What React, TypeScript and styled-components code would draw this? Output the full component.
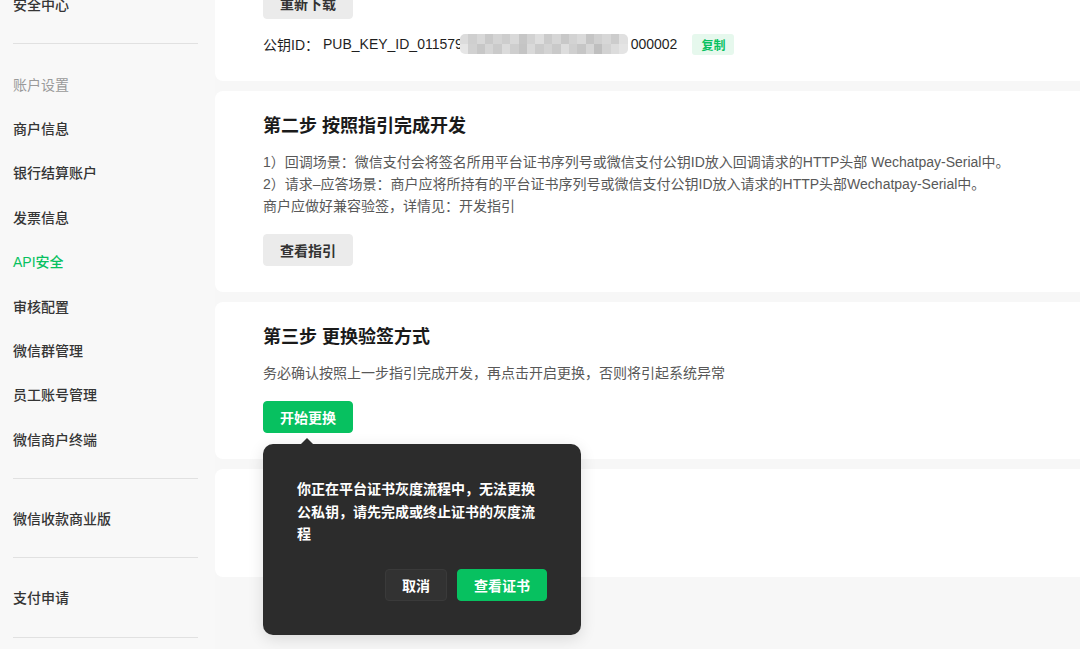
import React from "react";
import styled, { createGlobalStyle } from "styled-components";

const GlobalStyle = createGlobalStyle`
  html, body {
    margin: 0;
    padding: 0;
    background: #f7f7f7;
    font-family: "Liberation Sans", "Noto Sans CJK SC", sans-serif;
    overflow: hidden;
  }
  * { box-sizing: border-box; }
`;

const Page = styled.div`
  display: flex;
  width: 1080px;
  height: 649px;
  overflow: hidden;
`;

const Sidebar = styled.nav`
  width: 215px;
  flex-shrink: 0;
  padding: 0 17px 0 13px;
  margin-top: -18px;
  background: #f8f8f8;
`;

const NavSection = styled.div<{ $first?: boolean }>`
  padding: ${(p) => (p.$first ? "0 0 17px" : "17px 0")};
  border-bottom: 1px solid #e1e1e1;
`;

const NavItem = styled.div<{ $variant?: "heading" | "active" | "normal" }>`
  height: 44.4px;
  display: flex;
  align-items: center;
  font-size: 14px;
  font-weight: ${(p) => (p.$variant === "heading" ? 400 : 500)};
  color: ${(p) =>
    p.$variant === "heading" ? "#9a9a9a" : p.$variant === "active" ? "#07c160" : "#353535"};
`;

const Main = styled.main`
  flex: 1;
  margin-top: -37px;
  margin-right: -24px;
  display: flex;
  flex-direction: column;
  gap: 10.5px;
`;

const Card = styled.section<{ $minHeight?: number }>`
  background: #fff;
  border-radius: 8px;
  padding: 24px 48px 25.5px;
  min-height: ${(p) => (p.$minHeight ? `${p.$minHeight}px` : "auto")};
`;

const Title = styled.h2`
  margin: 0;
  font-size: 18px;
  line-height: 22px;
  font-weight: 700;
  color: #1a1a1a;
`;

const Desc = styled.div`
  margin-top: 14px;
  font-size: 14px;
  line-height: 22px;
  color: #585858;
`;

const Button = styled.button<{ $kind?: "grey" | "primary" | "dark" }>`
  height: 32px;
  padding: 0 16px;
  border-radius: 4px;
  font-family: inherit;
  font-size: 14px;
  font-weight: 700;
  cursor: pointer;
  display: inline-flex;
  align-items: center;
  justify-content: center;
  border: 1px solid
    ${(p) => (p.$kind === "primary" ? "#07c160" : p.$kind === "dark" ? "#3a3a3a" : "#ebebeb")};
  background: ${(p) => (p.$kind === "primary" ? "#07c160" : p.$kind === "dark" ? "#323232" : "#ebebeb")};
  color: ${(p) => (p.$kind === "grey" || !p.$kind ? "#333" : "#fff")};
`;

const ActionRow = styled.div`
  margin-top: 17px;
  display: flex;
`;

const KeyRow = styled.div`
  margin-top: 14px;
  display: flex;
  align-items: center;
  height: 22px;
  font-size: 14px;
  color: #1f1f1f;
`;

const KeyValue = styled.span`
  margin-left: 4px;
  display: inline-flex;
  align-items: center;
`;

const Mosaic = styled.span`
  display: inline-grid;
  grid-template-columns: repeat(20, 8.4px);
  grid-template-rows: repeat(2, 10px);
  border-radius: 5px;
  overflow: hidden;
  margin: 0 3px 0 -3px;
`;

const MosaicCell = styled.span<{ $c: string }>`
  background: ${(p) => p.$c};
`;

const CopyTag = styled.span`
  margin-left: 15px;
  height: 21px;
  padding: 0 9px;
  border-radius: 3px;
  background: #e6f8ed;
  color: #07c160;
  font-size: 12px;
  font-weight: 700;
  display: inline-flex;
  align-items: center;
`;

const PopAnchor = styled.div`
  position: relative;
  display: inline-block;
`;

const Popover = styled.div`
  position: absolute;
  top: calc(100% + 11px);
  left: 0;
  width: 318px;
  padding: 34px;
  background: #2c2c2c;
  border-radius: 10px;
  box-shadow: 0 4px 16px rgba(0, 0, 0, 0.12);
  z-index: 10;

  &::before {
    content: "";
    position: absolute;
    top: -6px;
    left: 38px;
    border-left: 6px solid transparent;
    border-right: 6px solid transparent;
    border-bottom: 6px solid #2c2c2c;
  }
`;

const PopText = styled.p`
  margin: 0;
  font-size: 14px;
  line-height: 22.5px;
  font-weight: 700;
  color: #fff;
`;

const PopActions = styled.div`
  margin-top: 23px;
  display: flex;
  justify-content: flex-end;
  gap: 10px;
`;

const mosaicColors = [
  "#dcdcdc", "#cfcfcf", "#d8d8d8", "#c9c9c9", "#d4d4d4", "#cdcdcd", "#d9d9d9", "#c6c6c6", "#d2d2d2", "#dedede",
  "#cbcbcb", "#d6d6d6", "#c8c8c8", "#d3d3d3", "#dadada", "#c5c5c5", "#d0d0d0", "#d7d7d7", "#cccccc", "#e0e0e0",
  "#e6e6e6", "#d1d1d1", "#c7c7c7", "#d5d5d5", "#cacaca", "#dbdbdb", "#cecece", "#c4c4c4", "#d9d9d9", "#cbcbcb",
  "#d3d3d3", "#c9c9c9", "#dddddd", "#cfcfcf", "#c6c6c6", "#d6d6d6", "#bfbfbf", "#d2d2d2", "#dcdcdc", "#e4e4e4",
];

const navGroups: { label: string; variant?: "heading" | "active" | "normal" }[][] = [
  [{ label: "安全中心" }],
  [
    { label: "账户设置", variant: "heading" },
    { label: "商户信息" },
    { label: "银行结算账户" },
    { label: "发票信息" },
    { label: "API安全", variant: "active" },
    { label: "审核配置" },
    { label: "微信群管理" },
    { label: "员工账号管理" },
    { label: "微信商户终端" },
  ],
  [{ label: "微信收款商业版" }],
  [{ label: "支付申请" }],
];

export default function App() {
  return (
    <>
      <GlobalStyle />
      <Page>
        <Sidebar>
          {navGroups.map((group, i) => (
            <NavSection key={i} $first={i === 0}>
              {group.map((item) => (
                <NavItem key={item.label} $variant={item.variant ?? "normal"}>
                  {item.label}
                </NavItem>
              ))}
            </NavSection>
          ))}
        </Sidebar>
        <Main>
          <Card>
            <Button $kind="grey">重新下载</Button>
            <KeyRow>
              公钥ID：
              <KeyValue>
                PUB_KEY_ID_011579
                <Mosaic>
                  {mosaicColors.map((c, i) => (
                    <MosaicCell key={i} $c={c} />
                  ))}
                </Mosaic>
                000002
              </KeyValue>
              <CopyTag>复制</CopyTag>
            </KeyRow>
          </Card>
          <Card>
            <Title>第二步 按照指引完成开发</Title>
            <Desc>
              1）回调场景：微信支付会将签名所用平台证书序列号或微信支付公钥ID放入回调请求的HTTP头部 Wechatpay-Serial中。
              <br />
              2）请求–应答场景：商户应将所持有的平台证书序列号或微信支付公钥ID放入请求的HTTP头部Wechatpay-Serial中。
              <br />
              商户应做好兼容验签，详情见：开发指引
            </Desc>
            <ActionRow>
              <Button $kind="grey">查看指引</Button>
            </ActionRow>
          </Card>
          <Card>
            <Title>第三步 更换验签方式</Title>
            <Desc>务必确认按照上一步指引完成开发，再点击开启更换，否则将引起系统异常</Desc>
            <ActionRow>
              <PopAnchor>
                <Button $kind="primary">开始更换</Button>
                <Popover>
                  <PopText>你正在平台证书灰度流程中，无法更换公私钥，请先完成或终止证书的灰度流程</PopText>
                  <PopActions>
                    <Button $kind="dark">取消</Button>
                    <Button $kind="primary">查看证书</Button>
                  </PopActions>
                </Popover>
              </PopAnchor>
            </ActionRow>
          </Card>
          <Card $minHeight={108} />
        </Main>
      </Page>
    </>
  );
}
